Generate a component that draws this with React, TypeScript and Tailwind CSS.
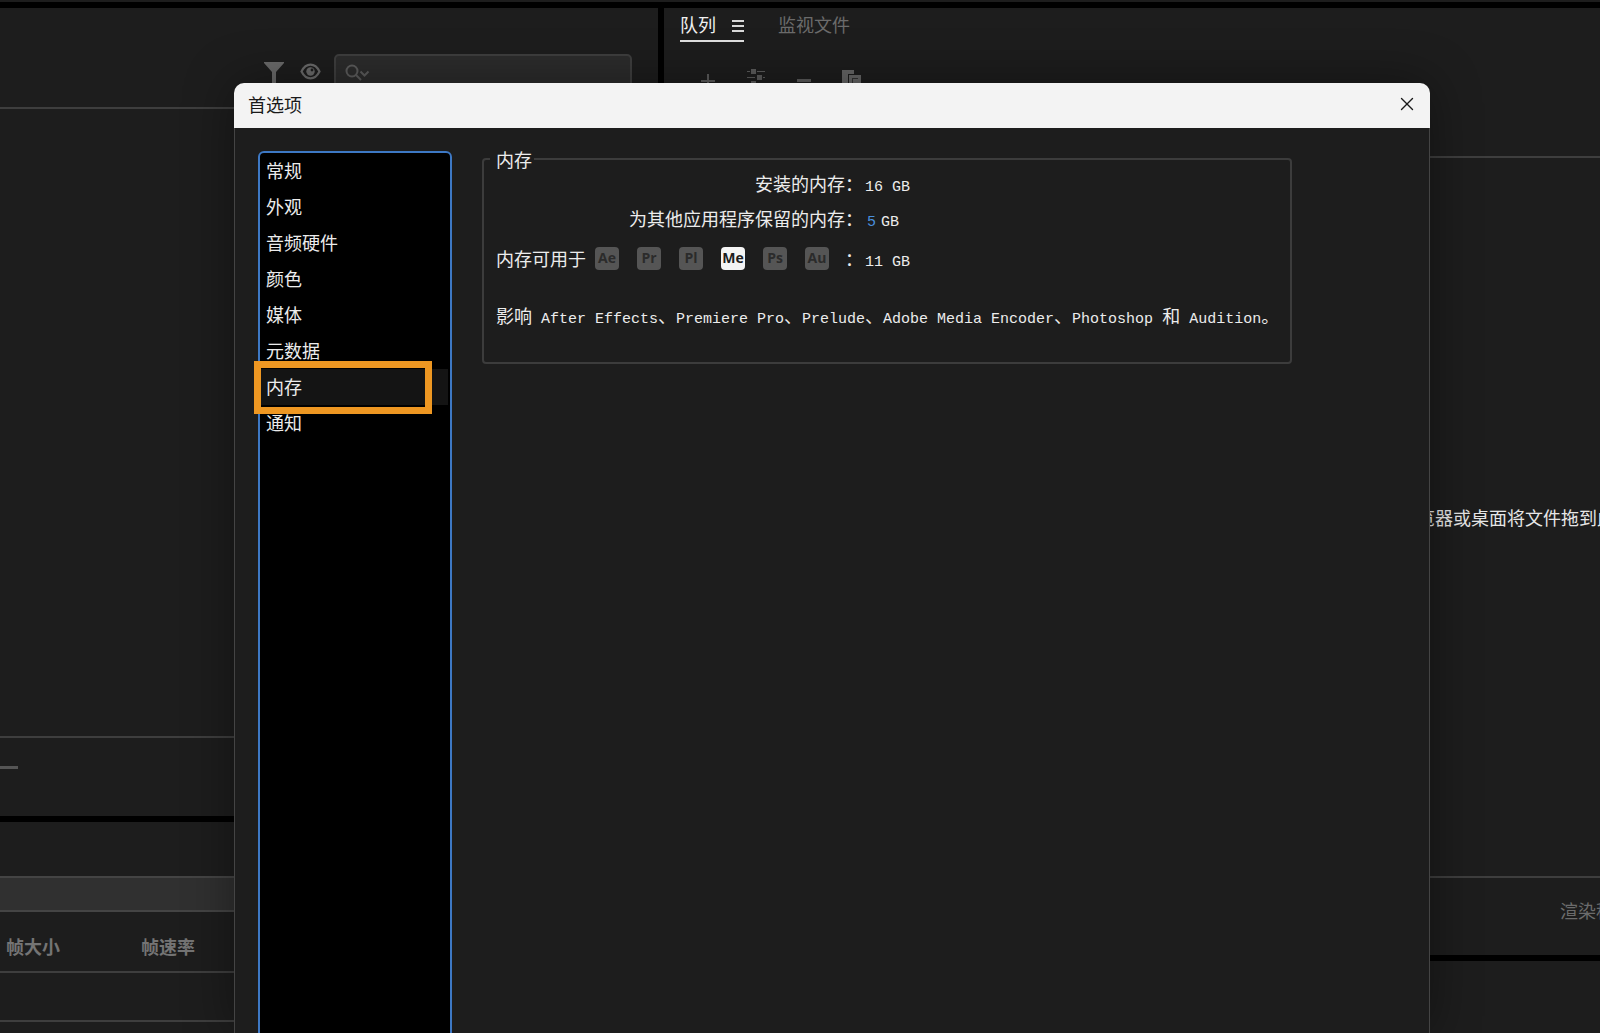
import { useState } from "react";
import { X } from "lucide-react";

const categories = ["常规", "外观", "音频硬件", "颜色", "媒体", "元数据", "内存", "通知"];
const apps = ["Ae", "Pr", "Pl", "Me", "Ps", "Au"];

function Mono({ children }: { children: React.ReactNode }) {
    return <span className="font-['Liberation_Mono',monospace] text-[15px]">{children}</span>
}

function SourcePanel() {
    return (
        <section className="flex-1 flex flex-col bg-[#1d1d1d] overflow-hidden">
            {/* Filter, preview and search */}
            <div className="h-[101px] shrink-0 flex items-start justify-end pr-[26px] pt-[46px] border-b-2 border-[#3e3e3e]">
                <button aria-label="筛选" className="mt-2 mr-4">
                    <svg width="20" height="24" viewBox="0 0 20 24" fill="#6a6a6a">
                        <path d="M0 0h20v1l-8 9v14H8V10L0 1z" />
                    </svg>
                </button>
                <button aria-label="预览" className="mt-[9px] mr-[13px]">
                    <svg width="21" height="17" viewBox="0 0 21 17" fill="none">
                        <path d="M1.5 8.500C4 3.500 7 1.700 10.500 1.700s6.500 1.800 9 6.800c-2.500 5-5.500 6.800-9 6.800S4 13.500 1.500 8.500z" stroke="#6a6a6a" strokeWidth="2.200" />
                        <circle cx="10.500" cy="8.500" r="4.200" fill="#6a6a6a" />
                        <circle cx="12" cy="7" r="1.400" fill="#1d1d1d" />
                    </svg>
                </button>
                <label className="w-[298px] h-9 flex items-start gap-2 px-[9px] pt-2 bg-[#2c2c2c] border-2 border-[#3e3e3e] rounded-[5px]">
                    <svg width="25" height="18" viewBox="0 0 25 18" fill="none" stroke="#5c5c5c" strokeWidth="2">
                        <circle cx="7" cy="7" r="5.500" />
                        <path d="M11 11l5 5" />
                        <path d="M15.500 7.500l4 4 4-4" />
                    </svg>
                    <input type="text" aria-label="搜索" className="flex-1 min-w-0 bg-transparent outline-none text-[#ccc] text-sm" />
                </label>
            </div>
            <div className="flex-1 border-b-2 border-[#3e3e3e]"></div>
            {/* Zoom slider track */}
            <div className="h-[78px] shrink-0 pt-[28px]">
                <div className="w-[18px] h-[3px] bg-[#555]"></div>
            </div>
        </section>
    )
}

function PresetPanel() {
    return (
        <section className="h-[211px] shrink-0 bg-[#1d1d1d] pt-[54px] overflow-hidden">
            <div className="h-9 bg-[#303030] border-y-2 border-[#444]"></div>
            <table className="w-full table-fixed text-left text-[#747474]">
                <thead>
                    <tr className="h-[60px] border-b-2 border-[#3e3e3e]">
                        <th className="w-[135px] pl-[6px] pt-2 font-bold">帧大小</th>
                        <th className="pl-[6px] pt-2 font-bold">帧速率</th>
                    </tr>
                </thead>
                <tbody>
                    <tr className="h-[49px] border-b-2 border-[#3e3e3e]">
                        <td></td>
                        <td></td>
                    </tr>
                </tbody>
            </table>
        </section>
    )
}

function QueuePanel() {
    return (
        <section className="flex-1 flex flex-col bg-[#1d1d1d] overflow-hidden">
            <nav className="flex items-start gap-[34px] pl-4 pt-[3px]">
                <button className="flex items-center gap-4 h-[31px] pb-1 border-b-2 border-[#e0e0e0] text-[#f0f0f0]">
                    队列
                    <svg className="mt-1" width="12" height="12" viewBox="0 0 12 12" fill="#d8d8d8">
                        <path d="M0 0h12v2H0zM0 5h12v2H0zM0 10h12v2H0z" />
                    </svg>
                </button>
                <button className="h-[26px] text-[#6b6b6b]">监视文件</button>
            </nav>
            <div className="h-[116px] shrink-0 flex items-start pl-[37px] pt-[27px] border-b-2 border-[#3e3e3e]">
                <button aria-label="添加源" className="mt-[5px] mr-8">
                    <svg width="14" height="14" viewBox="0 0 14 14" fill="#5c5c5c">
                        <path d="M6 0h2v6h6v2H8v6H6V8H0V6h6z" />
                    </svg>
                </button>
                <button aria-label="添加输出" className="mr-8">
                    <svg width="18" height="20" viewBox="0 0 18 20" fill="#5c5c5c">
                        <path d="M0 2h3v1H0zM4 0h5v5H4zM10 2h8v1h-8zM0 8h8v1H0zM10 6h5v5h-5zM16 8h2v1h-2zM0 14h3v1H0zM4 12h5v5H4zM10 14h8v1h-8z" />
                    </svg>
                </button>
                <button aria-label="移除" className="mt-[10px] mr-[31px]">
                    <svg width="14" height="3" viewBox="0 0 14 3" fill="#5c5c5c">
                        <path d="M0 0h14v3H0z" />
                    </svg>
                </button>
                <button aria-label="复制" className="mt-[1px]">
                    <svg width="19" height="20" viewBox="0 0 19 20" fill="#666">
                        <path d="M0 0h12v4H6v10H0z" />
                        <path d="M7 5h12v14H7z" />
                        <path d="M10 8v8h1V9h5V8z" fill="#333" />
                    </svg>
                </button>
            </div>
            <div className="flex-1 flex items-center justify-end border-b-2 border-[#3e3e3e] text-[#e6e6e6] whitespace-nowrap">
                <p className="-mr-[15px]">览器或桌面将文件拖到此</p>
            </div>
            <div className="h-[77px] shrink-0 flex justify-end pt-5 text-[#6b6b6b] whitespace-nowrap">
                <p className="-mr-[14px]">渲染程</p>
            </div>
        </section>
    )
}

function CategoryList() {
    const [selected, setSelected] = useState("内存");

    return (
        <ul className="w-[194px] shrink-0 bg-black border-2 border-[#3d78c4] rounded-md pr-0.5">
            {categories.map((name) => (
                <li key={name} className="relative">
                    <button
                        onClick={() => setSelected(name)}
                        className={`w-full h-9 pl-1.5 pb-0.5 text-left ${name === selected ? "bg-[#141414]" : ""}`}
                    >
                        {name}
                    </button>
                    {/* Callout around the memory entry */}
                    {name === "内存" && (
                        <div className="absolute z-10 -left-1.5 -top-2 w-[178px] h-[53px] border-[7px] border-[#ee9722] pointer-events-none"></div>
                    )}
                </li>
            ))}
        </ul>
    )
}

function MemorySettings() {
    const [reserved, setReserved] = useState("5");

    return (
        <fieldset className="w-[810px] h-[217px] min-w-0 border-2 border-[#3c3c3c] rounded-[4px] px-3">
            <legend className="h-6 -ml-1.5 pl-1.5 pr-0.5">内存</legend>
            <div className="h-7 flex items-baseline gap-0.5">
                <span className="w-[367px] text-right">安装的内存：</span>
                <Mono>16 GB</Mono>
            </div>
            <div className="h-7 mt-[7px] flex items-baseline gap-0.5">
                <label htmlFor="reserved" className="w-[367px] text-right">为其他应用程序保留的内存：</label>
                <span className="flex items-baseline gap-1 pl-0.5">
                    <input
                        id="reserved"
                        type="text"
                        value={reserved}
                        onChange={(e) => setReserved(e.target.value)}
                        className="w-[10px] bg-transparent outline-none text-[#4a8fdc] font-['Liberation_Mono',monospace] text-[15px]"
                    />
                    <Mono>GB</Mono>
                </span>
            </div>
            <div className="h-7 mt-3 flex items-baseline gap-0.5">
                <div className="w-[367px] flex items-center gap-[9px]">
                    <span>内存可用于</span>
                    <div className="flex gap-[18px]">
                        {apps.map((app) => (
                            <span
                                key={app}
                                className={`w-6 h-[23px] rounded flex items-center justify-center font-['Open_Sans',sans-serif] text-sm font-bold ${app === "Me" ? "bg-[#f4f4f4] text-[#1d1d1d]" : "bg-[#555] text-[#2b2b2b]"}`}
                            >
                                {app}
                            </span>
                        ))}
                    </div>
                    <span className="ml-auto">：</span>
                </div>
                <Mono>11 GB</Mono>
            </div>
            <p className="mt-[29px] whitespace-nowrap">
                影响<Mono> After Effects</Mono>、<Mono>Premiere Pro</Mono>、<Mono>Prelude</Mono>、<Mono>Adobe Media Encoder</Mono>、<Mono>Photoshop </Mono>和<Mono> Audition</Mono>。
            </p>
        </fieldset>
    )
}

export default function App() {
    return (
        <div lang="zh-CN" className="relative h-screen min-w-[1320px] overflow-hidden flex flex-col bg-black font-['Noto_Sans_CJK_SC',sans-serif] text-[18px] leading-6">
            <div className="h-0.5 shrink-0 bg-[#1d1d1d]"></div>
            <div className="flex-1 flex gap-1.5 pt-1.5">
                <div className="w-[658px] shrink-0 flex flex-col gap-1.5">
                    <SourcePanel />
                    <PresetPanel />
                </div>
                <div className="flex-1 min-w-0 flex flex-col gap-1.5">
                    <QueuePanel />
                    <div className="h-[72px] shrink-0 bg-[#1d1d1d]"></div>
                </div>
            </div>

            {/* Preferences window, runs off the bottom edge */}
            <div role="dialog" aria-labelledby="prefs-title" className="absolute top-[83px] bottom-0 left-[234px] right-[170px] flex flex-col rounded-t-[10px] bg-[#1d1d1d] shadow-[0_0_50px_rgba(0,0,0,0.4)]">
                <header className="h-[45px] shrink-0 flex items-center justify-between pl-[14px] pr-3 pb-[3px] rounded-t-[10px] bg-[#f3f3f3] text-[#1a1a1a]">
                    <h1 id="prefs-title">首选项</h1>
                    <button aria-label="关闭">
                        <X size={22} strokeWidth={1.5} />
                    </button>
                </header>
                <div className="flex-1 flex items-stretch gap-[30px] pl-[23px] border-x border-[#444] text-[#ececec]">
                    <div className="flex pt-[23px] -mb-3">
                        <CategoryList />
                    </div>
                    <div className="pt-[19px]">
                        <MemorySettings />
                    </div>
                </div>
            </div>
        </div>
    )
}
